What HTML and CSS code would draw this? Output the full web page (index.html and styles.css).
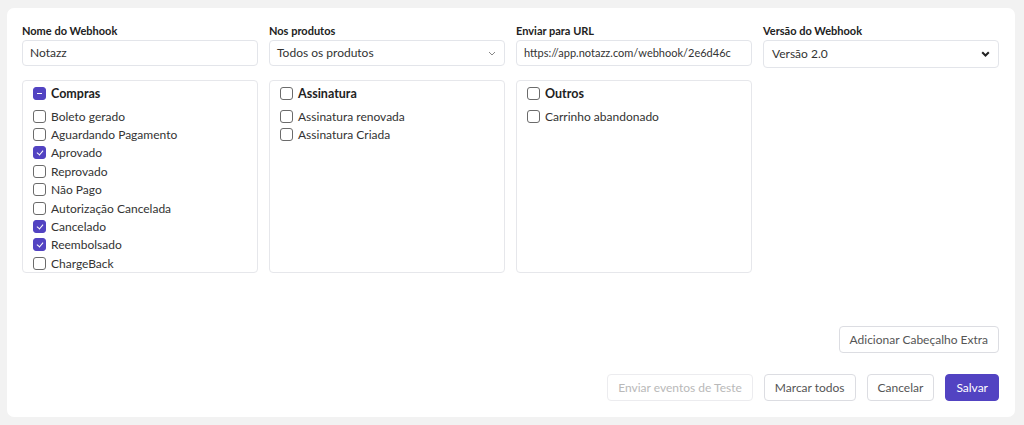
FILE: index.html
```html
<!DOCTYPE html>
<html lang="pt-BR">

<head>
    <meta charset="UTF-8" />
    <meta name="viewport" content="width=device-width, initial-scale=1.0" />
    <title>Webhook</title>
    <link rel="stylesheet" href="styles.css">
</head>

<body>
    <div class="card">
        <!-- Top fields -->
        <div class="fields">
            <div class="field">
                <label>Nome do Webhook</label>
                <div class="input">Notazz</div>
            </div>
            <div class="field">
                <label>Nos produtos</label>
                <div class="input select">
                    <span>Todos os produtos</span>
                    <svg width="8" height="5" viewBox="0 0 8 5"><path d="M1 1l3 3 3-3" fill="none" stroke="#888" stroke-width="1"/></svg>
                </div>
            </div>
            <div class="field">
                <label>Enviar para URL</label>
                <div class="input url">https://app.notazz.com/webhook/2e6d46c</div>
            </div>
            <div class="field">
                <label>Versão do Webhook</label>
                <div class="input select tall">
                    <span>Versão 2.0</span>
                    <svg width="9" height="6" viewBox="0 0 9 6"><path d="M1.2 1.2l3.3 3.3 3.3-3.3" fill="none" stroke="#222" stroke-width="2"/></svg>
                </div>
            </div>
        </div>

        <!-- Event groups -->
        <div class="groups">
            <div class="group">
                <div class="group-title"><span class="check partial"></span>Compras</div>
                <div class="item"><span class="check"></span>Boleto gerado</div>
                <div class="item"><span class="check"></span>Aguardando Pagamento</div>
                <div class="item"><span class="check on"></span>Aprovado</div>
                <div class="item"><span class="check"></span>Reprovado</div>
                <div class="item"><span class="check"></span>Não Pago</div>
                <div class="item"><span class="check"></span>Autorização Cancelada</div>
                <div class="item"><span class="check on"></span>Cancelado</div>
                <div class="item"><span class="check on"></span>Reembolsado</div>
                <div class="item"><span class="check"></span>ChargeBack</div>
            </div>
            <div class="group">
                <div class="group-title"><span class="check"></span>Assinatura</div>
                <div class="item"><span class="check"></span>Assinatura renovada</div>
                <div class="item"><span class="check"></span>Assinatura Criada</div>
            </div>
            <div class="group">
                <div class="group-title"><span class="check"></span>Outros</div>
                <div class="item"><span class="check"></span>Carrinho abandonado</div>
            </div>
        </div>

        <div class="extra">
            <button class="btn">Adicionar Cabeçalho Extra</button>
        </div>

        <div class="actions">
            <button class="btn disabled">Enviar eventos de Teste</button>
            <button class="btn">Marcar todos</button>
            <button class="btn">Cancelar</button>
            <button class="btn primary">Salvar</button>
        </div>
    </div>
</body>

</html>
```

FILE: styles.css
```css
body {
    margin: 0;
    padding: 8px 9px 8px 7px;
    font-family: Lato, "Open Sans", sans-serif;
    background-color: #f2f2f2;
    color: #333;
}

.card {
    background-color: white;
    border-radius: 7px;
    height: 409px;
    box-sizing: border-box;
    padding: 16px 16px 16px 15px;
    display: flex;
    flex-direction: column;
}

.fields,
.groups {
    display: grid;
    grid-template-columns: repeat(4, minmax(0, 1fr));
    gap: 11px;
}

.field label {
    display: block;
    font-size: 11px;
    font-weight: bold;
    color: #222;
    line-height: 14px;
    margin-bottom: 2px;
}

.input {
    height: 26px;
    box-sizing: border-box;
    border: 1px solid #e3e5ea;
    border-radius: 4px;
    padding: 0 7px;
    font-size: 12px;
    line-height: 24px;
    color: #333;
    white-space: nowrap;
    overflow: hidden;
}

.input.url {
    font-size: 11px;
    padding-right: 2px;
}

.input.tall {
    height: 28px;
    line-height: 26px;
    padding-left: 8px;
}

.select {
    display: flex;
    align-items: center;
    justify-content: space-between;
    padding-right: 8px;
}

.groups {
    margin-top: 12px;
}

.group {
    height: 193px;
    box-sizing: border-box;
    border: 1px solid #e6e7eb;
    border-radius: 4px;
    padding: 3px 10px;
}

.group-title {
    display: flex;
    align-items: center;
    font-size: 12.5px;
    font-weight: bold;
    color: #222;
    height: 18px;
    margin-bottom: 5px;
}

.item {
    display: flex;
    align-items: center;
    font-size: 12px;
    color: #333;
    height: 18.4px;
}

.check {
    width: 13px;
    height: 13px;
    box-sizing: border-box;
    border: 1px solid #6b6b6b;
    border-radius: 3px;
    margin-right: 5px;
    position: relative;
    flex-shrink: 0;
}

.check.on,
.check.partial {
    background-color: #5243c2;
    border-color: #5243c2;
}

.check.on::after {
    content: "";
    position: absolute;
    left: 4px;
    top: 2px;
    width: 3px;
    height: 5px;
    border: solid white;
    border-width: 0 1.5px 1.5px 0;
    transform: rotate(40deg);
}

.check.partial::after {
    content: "";
    position: absolute;
    left: 3px;
    top: 5px;
    width: 5px;
    height: 1.5px;
    background-color: white;
}

.extra {
    display: flex;
    justify-content: flex-end;
    margin-top: 53px;
}

.actions {
    display: flex;
    justify-content: flex-end;
    gap: 11px;
    margin-top: 21px;
}

.btn {
    height: 27px;
    padding: 0 10px;
    font-family: inherit;
    font-size: 12px;
    color: #555;
    background-color: white;
    border: 1px solid #dcdde2;
    border-radius: 4px;
}

.btn.disabled {
    color: #b9b9b9;
    border-color: #ececef;
}

.btn.primary {
    background-color: #5243c2;
    border-color: #5243c2;
    color: white;
}
```
